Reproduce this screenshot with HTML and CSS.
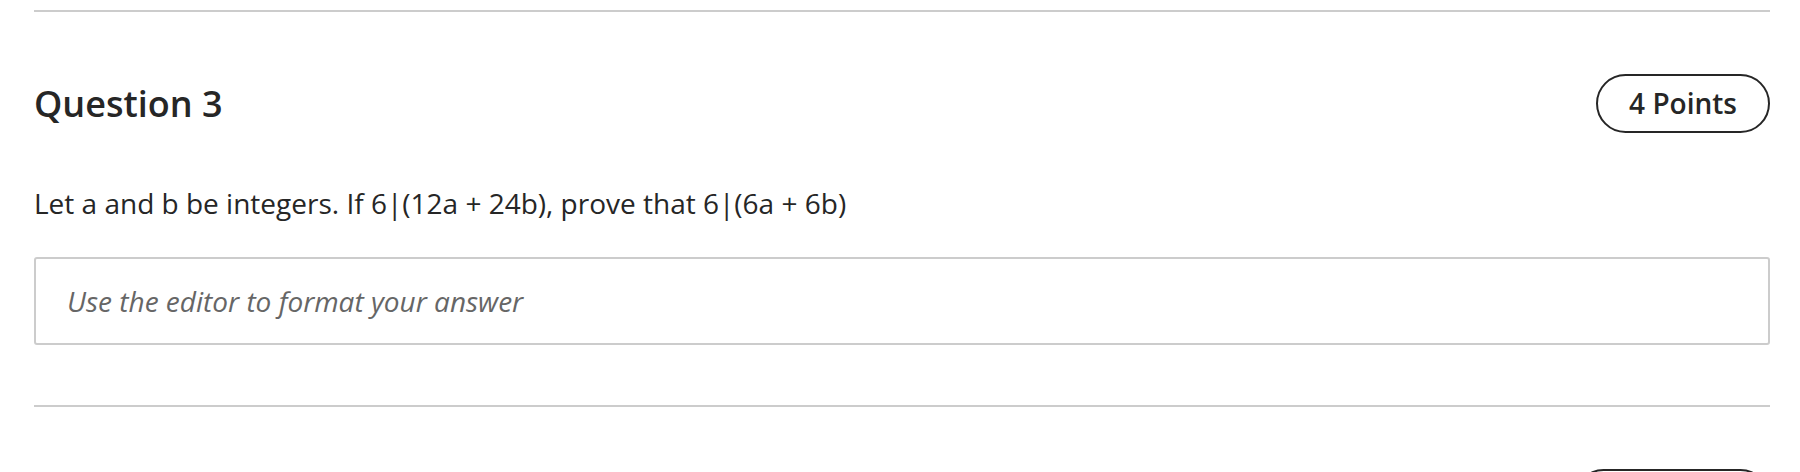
FILE: index.html
```html
<!DOCTYPE html>
<html>
<head>
  <title>Quiz</title>
  <link rel="stylesheet" href="styles.css">
</head>
<body>
  <div class="page">
    <div class="question">
      <div class="question-header">
        <h2>Question 3</h2>
        <span class="points">4 Points</span>
      </div>
      <p class="question-text">Let a and b be integers. If 6|(12a + 24b), prove that 6|(6a + 6b)</p>
      <div class="answer-box">
        <span class="placeholder">Use the editor to format your answer</span>
      </div>
    </div>
    <div class="question next">
      <div class="question-header">
        <span class="points points-empty"></span>
      </div>
    </div>
  </div>
</body>
</html>
```

FILE: styles.css
```css
/* quiz question styles */
body {
  margin: 0;
  font-family: "Open Sans", "Liberation Sans", sans-serif;
  color: #262626;
  background: #fff;
}

.page {
  padding: 10px 30px 0 34px;
}

.question {
  border-top: 2px solid #cccccc;
  padding: 62px 0 60px;
}

.question-header {
  display: flex;
  justify-content: space-between;
  align-items: center;
  margin-bottom: 49px;
}

.next .question-header {
  justify-content: flex-end;
}

.question-header h2 {
  margin: 0;
  font-size: 36px;
  font-weight: 600;
  line-height: 1.2;
}

.points {
  display: inline-block;
  height: 55px;
  line-height: 55px;
  padding: 0 31px;
  border: 2px solid #262626;
  border-radius: 30px;
  font-size: 28px;
  font-weight: 600;
}

.points-empty {
  width: 130px;
}

.question-text {
  margin: 0 0 33px;
  font-size: 28px;
  line-height: 42px;
}

.answer-box {
  display: flex;
  align-items: center;
  height: 84px;
  padding: 0 31px;
  border: 2px solid #cccccc;
  border-radius: 3px;
}

.placeholder {
  font-size: 28px;
  font-style: italic;
  color: #666666;
}
```
